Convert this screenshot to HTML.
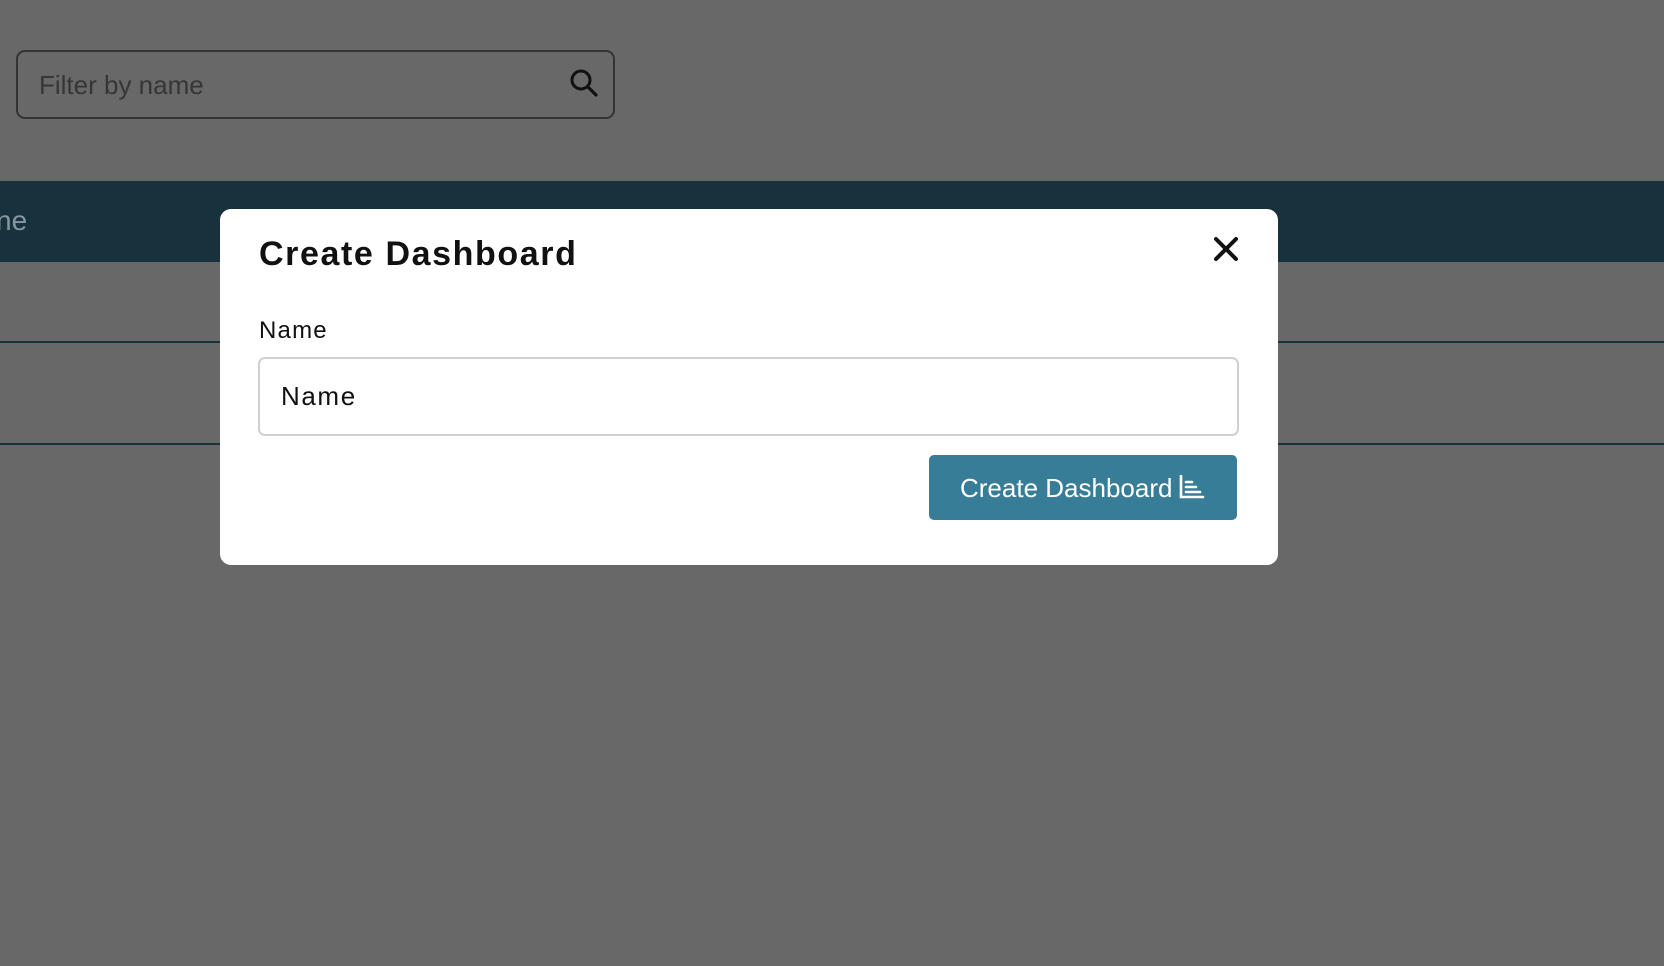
<!DOCTYPE html>
<html><head><meta charset="utf-8"><style>
*{box-sizing:border-box;margin:0;padding:0}
body{width:1664px;height:966px;background:#686868;position:relative;overflow:hidden;font-family:"Liberation Sans",sans-serif}
.search{position:absolute;left:16px;top:50px;width:599px;height:69px;border:2px solid #333;border-radius:9px}
.search span{position:absolute;left:21px;top:18px;font-size:26px;color:#363636}
.search svg{position:absolute;right:14px;top:16px}
.band{position:absolute;left:0;top:181px;width:1664px;height:81px;background:#17323d}
.band span{position:absolute;left:-4px;top:24px;font-size:28px;color:#8797a0}
.line{position:absolute;left:0;width:1664px;height:2px;background:#17323d}
.modal{position:absolute;left:220px;top:209px;width:1058px;height:356px;background:#fff;border-radius:11px}
.title{position:absolute;left:39px;top:26px;font-size:34px;font-weight:bold;color:#111;letter-spacing:1.6px}
.close{position:absolute;left:992px;top:26px}
.label{position:absolute;left:39px;top:108px;font-size:24px;color:#111;letter-spacing:1.2px}
.input{position:absolute;left:38px;top:148px;width:981px;height:79px;border:2px solid #d0d0d0;border-radius:7px}
.input span{position:absolute;left:21px;top:22px;font-size:26px;color:#111;letter-spacing:1.6px}
.btn{position:absolute;left:709px;top:246px;width:308px;height:65px;background:#387d97;border-radius:5px;color:#fff;font-size:26px}
.btn span{position:absolute;left:31px;top:18px}
.btn svg{position:absolute;left:250px;top:20px}
</style></head><body>
<div class="search"><span>Filter by name</span>
<svg width="30" height="30" viewBox="0 0 30 30"><circle cx="12" cy="12" r="9" fill="none" stroke="#111" stroke-width="3"/><line x1="19" y1="19" x2="27" y2="27" stroke="#111" stroke-width="3.2" stroke-linecap="round"/></svg></div>
<div class="band"><span>ne</span></div>
<div class="line" style="top:341px"></div>
<div class="line" style="top:443px"></div>
<div class="modal">
<div class="title">Create Dashboard</div>
<svg class="close" width="28" height="28" viewBox="0 0 28 28"><path d="M4 4L24 24M24 4L4 24" stroke="#111" stroke-width="4" stroke-linecap="round"/></svg>
<div class="label">Name</div>
<div class="input"><span>Name</span></div>
<div class="btn"><span>Create Dashboard</span>
<svg width="26" height="24" viewBox="0 0 26 24"><path d="M2 1V22H24" fill="none" stroke="#fff" stroke-width="2.6" stroke-linecap="round"/><path d="M7 7H13M7 12H17M7 17H21" stroke="#fff" stroke-width="2.6" stroke-linecap="round"/></svg></div>
</div>
</body></html>
